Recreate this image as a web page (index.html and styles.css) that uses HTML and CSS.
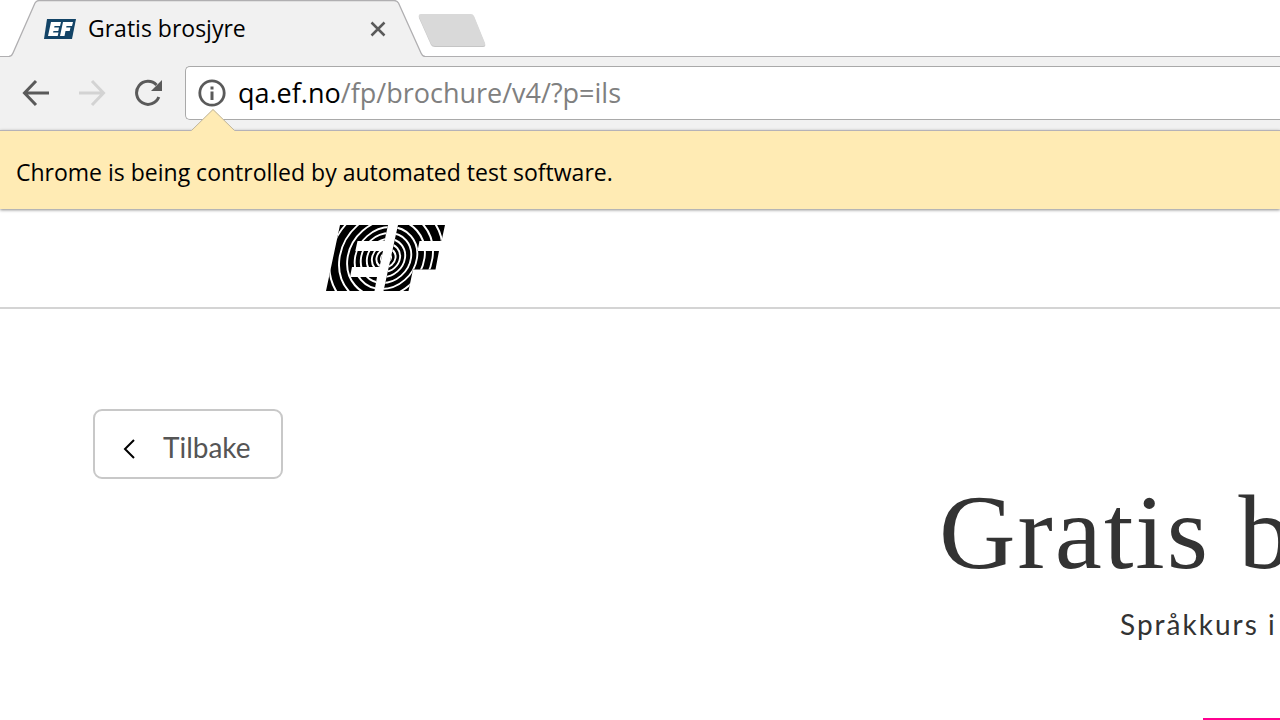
FILE: index.html
```html
<!DOCTYPE html>
<html lang="no">
<head>
<meta charset="utf-8">
<title>Gratis brosjyre</title>
<link rel="stylesheet" href="styles.css">
</head>
<body>
<div class="browser">
  <div class="tabs">
    <div class="tab">
      <svg class="tab-shape" width="416" height="57" viewBox="0 0 416 57" aria-hidden="true">
        <path d="M0 57V56.500Q3 56 4 53L26 3Q27.500.500 30 .500H385Q388 .500 389.500 3L412 53Q413.500 56.500 416 56.500V57Z" fill="#f1f1f1"/>
        <path d="M0 56.500Q3 56 4 53L26 3Q27.500.500 30 .500H385Q388 .500 389.500 3L412 53Q413.500 56.500 416 56.500" fill="none" stroke="#b0afb1" stroke-width="1.300"/>
      </svg>
      <svg class="favicon" width="32" height="20" viewBox="0 0 32 20" aria-hidden="true">
        <path d="M3 0H32L28 20H0Z" fill="#134467"/>
        <path d="M7 3H17L16 7H10.500L10.200 8.500H15L14.300 12H9.500L9 13.500H14.500L13.700 17H4ZM19 3H29L28 7H22.500L22.200 8.500H26.500L25.700 12H21.500L20.500 17H16Z" fill="#fff"/>
      </svg>
      <span class="tab-title">Gratis brosjyre</span>
      <button class="icon-button" aria-label="Close tab">
        <svg width="16" height="16" viewBox="0 0 16 16"><path d="M1.500 1.500L14.500 14.500M14.500 1.500L1.500 14.500" stroke="#5a5a5a" stroke-width="2.500"/></svg>
      </button>
    </div>
    <button class="icon-button new-tab" aria-label="New tab">
      <svg width="70" height="36" viewBox="0 0 70 36">
        <path d="M3 2H53Q55 2 56 4L67 31Q68 34 65 34H17Q14 34 13 32L1 5Q0 2 3 2Z" fill="#c5c5c5"/>
        <path d="M3 1H53Q55 1 56 3L67 30Q68 33 65 33H17Q14 33 13 31L1 4Q0 1 3 1Z" fill="#d9d9d9"/>
      </svg>
    </button>
  </div>
  <div class="toolbar">
    <button class="icon-button" aria-label="Back">
      <svg width="28" height="28" viewBox="0 0 28 28"><path d="M14 2L2.500 14L14 26M2.500 14H27" fill="none" stroke="#5a5a5a" stroke-width="3"/></svg>
    </button>
    <button class="icon-button" aria-label="Forward" disabled>
      <svg width="28" height="28" viewBox="0 0 28 28"><path d="M14 2L25.500 14L14 26M25.500 14H1" fill="none" stroke="#d3d3d3" stroke-width="3"/></svg>
    </button>
    <button class="icon-button" aria-label="Reload">
      <svg width="28" height="28" viewBox="0 0 28 28"><path d="M22.500 6A11.500 11.500 0 1 0 24.800 18" fill="none" stroke="#5a5a5a" stroke-width="3"/><path d="M28 1V12H17Z" fill="#5a5a5a"/></svg>
    </button>
    <div class="address" role="textbox" aria-label="Address">
      <svg width="28" height="28" viewBox="0 0 28 28" aria-hidden="true"><circle cx="14" cy="14" r="12.200" fill="none" stroke="#5a5a5a" stroke-width="2.800"/><path d="M12.500 7.500H15.500V10.500H12.500ZM12.500 12.500H15.500V21H12.500Z" fill="#5a5a5a"/></svg>
      <span class="url">qa.ef.no<span class="path">/fp/brochure/v4/?p=ils</span></span>
    </div>
  </div>
  <div class="infobar">
    <svg class="pointer" width="46" height="22" viewBox="0 0 46 22" aria-hidden="true"><path d="M1 22L23 0L45 22Z" fill="#ffebb4"/><path d="M1.500 21.500L23 .500L44.500 21.500" fill="none" stroke="#bdb49d"/></svg>
    Chrome is being controlled by automated test software.
  </div>
</div>
<header class="site-header">
  <a class="logo" href="#" aria-label="EF">
    <svg width="120" height="66" viewBox="0 0 120 66">
      <defs>
        <clipPath id="letters">
          <path d="M14 0H62L58.500 16H31.500L29.300 26H57L53.500 42H26L24 52H51L48.500 66H0ZM72 0H119L115.500 16H93.500L91.500 26H113L109.500 44.500H87L82.500 66H57.500Z"/>
        </clipPath>
      </defs>
      <g clip-path="url(#letters)">
        <path d="M0 0H120V66H0Z"/>
        <g transform="translate(60 33) skewX(-8)" fill="none" stroke="#fff" stroke-width="1.900">
          <circle r="5"/><circle r="9.500"/><circle r="14"/><circle r="19"/><circle r="25"/><circle r="31"/><circle r="38.500"/><circle r="46.500"/><circle r="56"/>
        </g>
      </g>
    </svg>
  </a>
</header>
<main class="content">
  <button class="back">
    <svg width="12" height="20" viewBox="0 0 12 20" aria-hidden="true"><path d="M11 1L2 10L11 19" fill="none" stroke="#000" stroke-width="2"/></svg>
    <span>Tilbake</span>
  </button>
  <div class="intro">
    <h1>Gratis b</h1>
    <p>Språkkurs i</p>
  </div>
  <div class="accent"></div>
</main>
</body>
</html>
```
FILE: styles.css
```css
* { box-sizing: border-box; }
body {
  margin: 0;
  min-height: 100vh;
  overflow: hidden;
  background: #fff;
  color: #333;
  font-family: Lato, sans-serif;
}
svg { display: block; flex: none; }
.browser {
  color: #000;
  font-family: "Open Sans", "Noto Sans", sans-serif;
}
.icon-button {
  padding: 0;
  border: 0;
  background: none;
}
.tabs {
  display: flex;
  align-items: flex-start;
  height: 57px;
  padding-left: 9px;
  background: linear-gradient(#b0afb1, #b0afb1) bottom / 100% 1px no-repeat #fff;
}
.tab {
  position: relative;
  display: flex;
  align-items: center;
  gap: 12px;
  width: 416px;
  height: 57px;
  padding: 0 39px 0 35px;
}
.tab-shape {
  position: absolute;
  inset: 0;
}
.favicon, .tab-title, .tab .icon-button { position: relative; }
.tab-title {
  flex: 1;
  padding-bottom: 2px;
  font-size: 23px;
  line-height: 32px;
}
.new-tab {
  margin: 13px 0 0 -7px;
}
.toolbar {
  display: flex;
  align-items: center;
  gap: 28px;
  height: 73px;
  padding: 0 0 2px 22px;
  background: #f1f1f1;
}
.address {
  display: flex;
  flex: 1;
  align-items: center;
  gap: 12px;
  height: 54px;
  margin-left: -5px;
  padding-left: 12px;
  border: 1px solid #a9a9a9;
  border-right: 0;
  border-radius: 5px 0 0 5px;
  background: #fff;
}
.url {
  font-size: 27px;
  line-height: 36px;
  white-space: nowrap;
}
.path { color: #808080; }
.infobar {
  position: relative;
  height: 79px;
  padding: 25px 16px 0;
  border-top: 1px solid #b5b2b8;
  background: #ffebb4;
  box-shadow: 0 1px 3px #888;
  font-size: 23px;
  line-height: 32px;
}
.pointer {
  position: absolute;
  top: -22px;
  left: 190px;
}
.site-header {
  padding: 16px 0 16px 326px;
  border-bottom: 2px solid #d4d4d4;
}
.logo { display: block; width: 120px; }
.content {
  display: flex;
  flex-direction: column;
  align-items: flex-start;
  padding: 100px 0 0 93px;
}
.back {
  display: flex;
  align-items: center;
  gap: 28px;
  height: 70px;
  padding: 6px 30px 0 28px;
  border: 2px solid #c8c8c8;
  border-radius: 9px;
  background: #fff;
  color: #555;
  font-family: Lato, sans-serif;
  font-size: 28px;
  line-height: 32px;
}
.back svg { margin-top: 4px; }
.intro {
  align-self: stretch;
  padding-left: 846px;
  white-space: nowrap;
}
.intro h1 {
  margin: 0;
  font: 400 106px/108px "Liberation Serif", serif;
  letter-spacing: 2px;
}
.intro p {
  margin: 19px 0 0 181px;
  font-size: 28px;
  line-height: 36px;
  letter-spacing: 2px;
}
.accent {
  align-self: stretch;
  height: 2px;
  margin: 76px 0 0 1110px;
  background: #ff0090;
}
```
